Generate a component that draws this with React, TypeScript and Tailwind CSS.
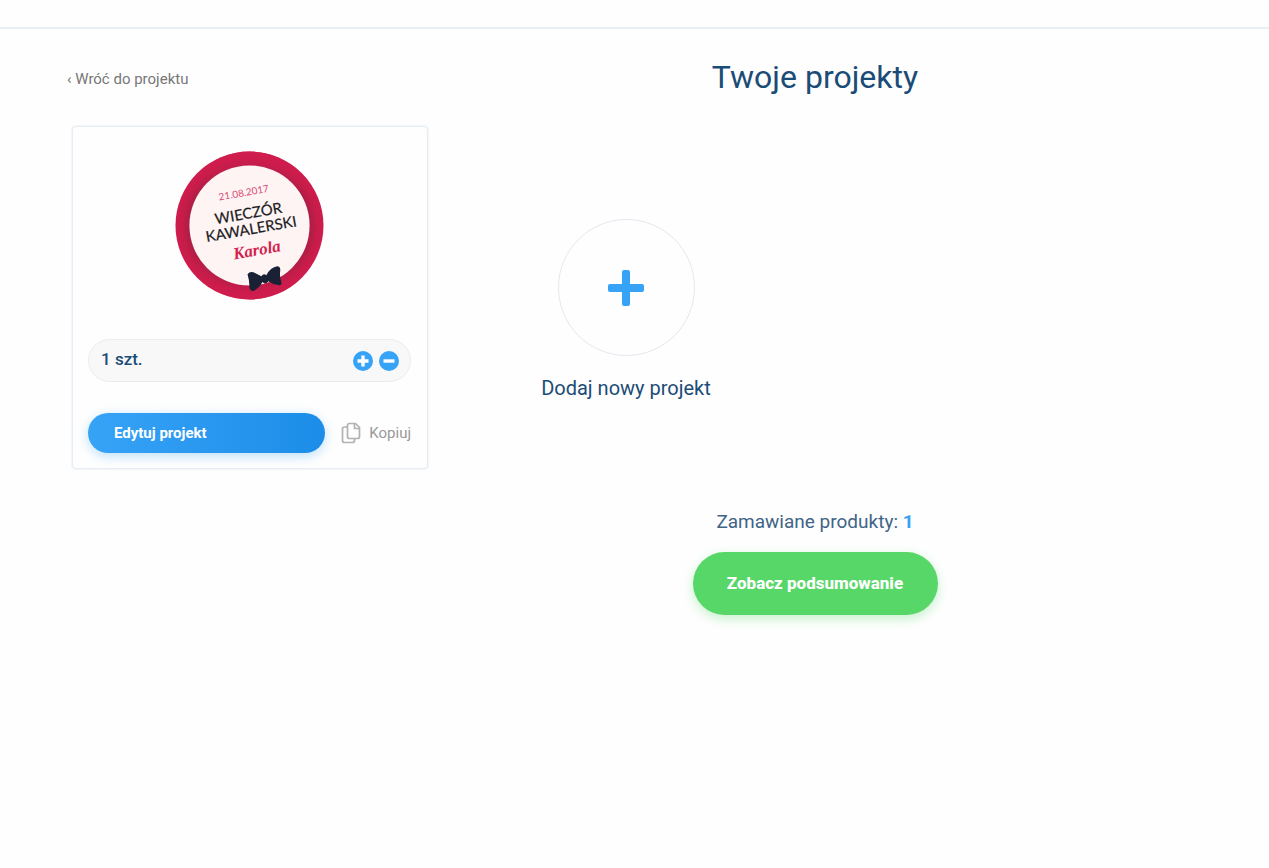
import React, { useState } from "react";

function Badge() {
  return (
    <svg viewBox="0 0 150 150" className="size-[149px]" role="img" aria-label="Wieczór kawalerski Karola">
      <defs>
        <radialGradient id="ring">
          <stop offset="0.8" stopColor="#aa1e43" />
          <stop offset="0.91" stopColor="#c61c49" />
          <stop offset="1" stopColor="#cf1c4d" />
        </radialGradient>
        <linearGradient id="shade" x1="0" y1="0" x2="0" y2="1">
          <stop offset="0" stopColor="#d01c4e" stopOpacity="0.9" />
          <stop offset="0.3" stopColor="#d01c4e" stopOpacity="0" />
          <stop offset="0.7" stopColor="#d01c4e" stopOpacity="0" />
          <stop offset="1" stopColor="#d01c4e" stopOpacity="0.7" />
        </linearGradient>
      </defs>
      <circle cx="75" cy="75" r="74.5" fill="url(#ring)" />
      <circle cx="75" cy="75" r="74.5" fill="url(#shade)" />
      <circle cx="75" cy="75" r="60.5" fill="#fdf4f3" />
      <g transform="rotate(-10 75 75)" textAnchor="middle">
        <text x="75" y="45" fontFamily="Lato, sans-serif" fontSize="10" fill="#dc4873">21.08.2017</text>
        <text x="76" y="68" fontFamily="Lato, sans-serif" fontSize="15" fontWeight="400" fill="#1c1c24" stroke="#1c1c24" strokeWidth="0.2">WIECZÓR</text>
        <text x="76" y="84" fontFamily="Lato, sans-serif" fontSize="15" fontWeight="400" fill="#1c1c24" stroke="#1c1c24" strokeWidth="0.2">KAWALERSKI</text>
        <text x="78" y="106" fontFamily="'Liberation Serif', serif" fontSize="17" fontStyle="italic" fontWeight="700" fill="#d51f50">Karola</text>
      </g>
      <path
        d="M73 124 Q75 121 79 122 L87 126 Q89 123 92 125 Q96 117 103 116 Q106 116 106 120 Q105 126 107 132 Q108 136 104 135 Q98 134 94 131 Q91 135 88 132 Q85 138 79 141 Q75 141 75 137 Q75 130 73 124Z"
        fill="#1b2135"
      />
    </svg>
  );
}

function RoundIcon({ minus = false }: { minus?: boolean }) {
  return (
    <svg viewBox="0 0 20 20" className="size-5" aria-hidden="true">
      <circle cx="10" cy="10" r="10" fill="#36a3f7" />
      <path d={minus ? "M4.5 10H15.5" : "M4.5 10H15.5M10 4.5V15.5"} stroke="#fff" strokeWidth="3.4" />
    </svg>
  );
}

function CopyIcon() {
  return (
    <svg viewBox="0 0 20 22" className="h-[22px] w-5" fill="none" stroke="#b2b2b2" strokeWidth="1.7" strokeLinejoin="round" aria-hidden="true">
      <path d="M8.500 1.500H14.500L18.500 5.500V14.500Q18.500 16.500 16.500 16.500H8.500Q6.500 16.500 6.500 14.500V3.500Q6.500 1.500 8.500 1.500Z" />
      <path d="M13.500 1.500V6.500H18.500" />
      <path d="M6.500 5H3.500Q1.500 5 1.500 7V18.500Q1.500 20.500 3.500 20.500H11.500Q13.500 20.500 13.500 18.500V16.500" />
    </svg>
  );
}

export default function App() {
  const [count, setCount] = useState(1);
  return (
    <div className="min-h-screen bg-[#fefefe] font-['Roboto',sans-serif] text-[#1b4c77]">
      <header className="h-[29px] border-b-2 border-[#e9f0f5]" />
      <main>
        <div className="flex items-center pt-7">
          <a href="#projekt" className="w-[361px] shrink-0 pt-1 pl-[67px] text-[15px] text-[#777]">‹ Wróć do projektu</a>
          <h1 className="flex-1 text-center text-[32px] leading-10">Twoje projekty</h1>
        </div>
        <div className="flex items-start pt-[29px] pl-[72px]">
          <article className="w-[356px] rounded border border-[#e7edf3] pt-6 pr-4 pb-[15px] pl-[15px] shadow-[0_0_2px_#d0deea]">
            <div className="flex justify-center">
              <Badge />
            </div>
            <div className="mt-[39px] flex h-[43px] items-center gap-1.5 rounded-full border border-[#ececec] bg-[#f8f8f8] pr-[11px] pl-3">
              <span className="flex-1 pb-0.5 text-[17px] font-medium">{count} szt.</span>
              <button type="button" aria-label="Dodaj sztukę" onClick={() => setCount(count + 1)}>
                <RoundIcon />
              </button>
              <button type="button" aria-label="Usuń sztukę" onClick={() => setCount(Math.max(1, count - 1))}>
                <RoundIcon minus />
              </button>
            </div>
            <div className="mt-[31px] flex items-center justify-between">
              <button type="button" className="h-10 w-[237px] rounded-full bg-linear-to-r from-[#36a3f7] to-[#1b8de8] pl-[26px] text-left text-[15px] font-bold text-white shadow-[0_3px_12px_#36a3f755]">
                Edytuj projekt
              </button>
              <button type="button" className="flex items-center gap-2 text-[15px] text-[#999]">
                <CopyIcon />
                Kopiuj
              </button>
            </div>
          </article>
          <button type="button" className="mt-[93px] ml-[98px] flex w-[200px] flex-col items-center gap-5 text-[20px] leading-6">
            <span className="flex size-[137px] items-center justify-center rounded-full border border-[#e5e7ef]">
              <svg viewBox="0 0 36 36" className="size-9" aria-hidden="true">
                <rect x="0" y="14" width="36" height="8" rx="2" fill="#36a3f7" />
                <rect x="14" y="0" width="8" height="36" rx="2" fill="#36a3f7" />
              </svg>
            </span>
            Dodaj nowy projekt
          </button>
        </div>
        <div className="flex flex-col items-center gap-[18px] pt-[41px] pl-[361px]">
          <p className="text-[19px] leading-6 text-[#406486]">
            Zamawiane produkty: <strong className="text-[#36a3f7]">{count}</strong>
          </p>
          <button type="button" className="h-[63px] w-[245px] rounded-full bg-[#57d768] text-[17px] font-extrabold text-white shadow-[0_4px_12px_#57d76855]">
            Zobacz podsumowanie
          </button>
        </div>
      </main>
    </div>
  );
}
